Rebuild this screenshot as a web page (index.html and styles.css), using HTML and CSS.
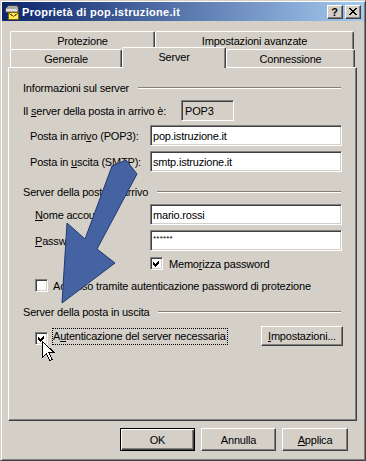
FILE: index.html
```html
<!DOCTYPE html>
<html>
<head>
<meta charset="utf-8">
<link rel="stylesheet" href="styles.css">
</head>
<body>
<div class="window">
  <div class="titlebar">
    <svg class="app-icon" viewBox="0 0 16 16" width="16" height="16" shape-rendering="crispEdges">
      <polygon points="2,5 6,1 14,1 15,3 15,8 2,8" fill="#a8a8a8" stroke="#404040" stroke-width="1"/>
      <rect x="3" y="5" width="11" height="2" fill="#e0e0e0"/>
      <rect x="5.5" y="8.5" width="10" height="7" fill="#ffe860" stroke="#806000" stroke-width="1"/>
      <polyline points="6,9 10.5,12.5 15,9" fill="none" stroke="#806000" stroke-width="1"/>
    </svg>
    <span class="title">Proprietà di pop.istruzione.it</span>
    <span class="cbtn help">?</span>
    <span class="cbtn close">
      <svg viewBox="0 0 8 7" width="8" height="7" shape-rendering="crispEdges">
        <path d="M0 0h2v1h-2zM6 0h2v1h-2zM1 1h2v1h-2zM5 1h2v1h-2zM2 2h4v1h-4zM3 3h2v1h-2zM2 4h4v1h-4zM1 5h2v1h-2zM5 5h2v1h-2zM0 6h2v1h-2zM6 6h2v1h-2z" fill="#000"/>
      </svg>
    </span>
  </div>
  <div class="dialog">
    <div class="tabs">
      <div class="tabrow">
        <div class="tab t-prot">Protezione</div>
        <div class="tab t-imp">Impostazioni avanzate</div>
      </div>
      <div class="tabrow front">
        <div class="tab t-gen">Generale</div>
        <div class="tab t-srv selected">Server</div>
        <div class="tab t-con">Connessione</div>
      </div>
    </div>
    <div class="panel">
      <div class="ghead"><span>Informazioni sul server</span></div>
      <div class="row r-info">
        <span class="lbl lbl-info">Il <u>s</u>erver della posta in arrivo è:</span>
        <span class="field readonly">POP3</span>
      </div>
      <div class="row r-in ind1">
        <span class="lbl">Posta in arri<u>v</u>o (POP3):</span>
        <span class="field">pop.istruzione.it</span>
      </div>
      <div class="row r-out ind1">
        <span class="lbl">Posta in <u>u</u>scita (SMTP):</span>
        <span class="field">smtp.istruzione.it</span>
      </div>
      <div class="ghead g2"><span>Server della posta in arrivo</span></div>
      <div class="row r-acc ind2">
        <span class="lbl"><u>N</u>ome account:</span>
        <span class="field">mario.rossi</span>
      </div>
      <div class="row r-pwd ind2">
        <span class="lbl"><u>P</u>assword:</span>
        <span class="field pwd">******</span>
      </div>
      <div class="crow r-mem">
        <span class="cb checked"><svg viewBox="0 0 13 13" width="13" height="13" shape-rendering="crispEdges"><polygon points="3,5 5,7 9,3 9,6 5,10 3,8" fill="#000"/></svg></span>
        <span class="clabel">Memo<u>r</u>izza password</span>
      </div>
      <div class="crow r-spa">
        <span class="cb"></span>
        <span class="clabel">Accesso tramite autenticazione password di protezione</span>
      </div>
      <div class="ghead g3"><span>Server della posta in uscita</span></div>
      <div class="crow r-auth">
        <span class="cb checked"><svg viewBox="0 0 13 13" width="13" height="13" shape-rendering="crispEdges"><polygon points="3,5 5,7 9,3 9,6 5,10 3,8" fill="#000"/></svg></span>
        <span class="focus">A<u>u</u>tenticazione del server necessaria</span>
        <span class="btn btn-imp"><u>I</u>mpostazioni...</span>
      </div>
    </div>
    <div class="buttons">
      <span class="btn default">OK</span>
      <span class="btn">Annulla</span>
      <span class="btn btn-apply"><u>A</u>pplica</span>
    </div>
  </div>
</div>
<svg class="overlay" width="366" height="461" viewBox="0 0 366 461">
  <polygon points="112,166 126,160 137,174 97,249 115,263 62,303 67,223 85,239" fill="#4563a2" stroke="#22386f" stroke-width="1" stroke-linejoin="round"/>
</svg>
<svg class="cursor" width="13" height="21" viewBox="0 0 13 21" shape-rendering="crispEdges">
  <polygon points="0.5,0.5 0.5,16.5 4.5,12.5 7.5,19.5 10,18.5 7,11.5 12,11.5" fill="#fff" stroke="#000" stroke-width="1"/>
</svg>
</body>
</html>
```
FILE: styles.css
```css
html, body {
  margin: 0;
  padding: 0;
}
body {
  background: #d4d0c8;
  font-family: "Liberation Sans", Arial, sans-serif;
  font-size: 11px;
  letter-spacing: -0.2px;
  color: #000;
}
u { text-decoration: underline; text-underline-offset: 1px; }

.window {
  width: 366px;
  height: 461px;
  box-sizing: border-box;
  border: 1px solid;
  border-color: #d4d0c8 #404040 #404040 #d4d0c8;
  box-shadow: inset 1px 1px #fff, inset -1px -1px #808080;
  padding: 1px;
  display: flex;
  flex-direction: column;
}

.titlebar {
  height: 19px;
  flex: none;
  display: flex;
  align-items: center;
  padding: 0 3px 0 1px;
  background: linear-gradient(90deg, #0a246a 0%, #a6caf0 100%);
}
.app-icon { flex: none; display: block; }
.title {
  color: #fff;
  font-weight: bold;
  letter-spacing: 0.3px;
  margin-left: 3px;
  flex: 1;
  white-space: nowrap;
}
.cbtn {
  width: 16px;
  height: 14px;
  box-sizing: border-box;
  flex: none;
  background: #d4d0c8;
  border: 1px solid;
  border-color: #fff #404040 #404040 #fff;
  box-shadow: inset -1px -1px #808080;
  display: flex;
  align-items: center;
  justify-content: center;
  letter-spacing: 0;
}
.cbtn svg { display: block; margin-left: -1px; }
.help { font-weight: bold; font-size: 11px; line-height: 12px; padding-right: 1px; }
.close { margin-left: 2px; }

.dialog {
  flex: 1;
  display: flex;
  flex-direction: column;
  padding: 10px 7px 0 6px;
}

.tabs { margin-left: 2px; }
.tabrow {
  display: flex;
  align-items: flex-end;
  height: 18px;
}
.tab {
  box-sizing: border-box;
  height: 18px;
  line-height: 17px;
  padding-top: 1px;
  text-align: center;
  background: #d4d0c8;
  border-top: 1px solid #fff;
  border-left: 1px solid #fff;
  border-right: 1px solid #404040;
  box-shadow: inset -1px 0 #808080;
  border-radius: 2px 2px 0 0;
  white-space: nowrap;
}
.t-prot { width: 145px; }
.t-imp { width: 199px; }
.t-gen { width: 112px; }
.t-srv { width: 104px; }
.t-con { width: 129px; }
.tab.selected {
  height: 21px;
  line-height: 19px;
  padding-top: 0;
  margin-bottom: -1px;
  position: relative;
  z-index: 1;
}

.panel {
  width: 349px;
  height: 354px;
  box-sizing: border-box;
  border: 1px solid;
  border-color: #fff #404040 #404040 #fff;
  box-shadow: inset -1px -1px #808080;
  padding-top: 13px;
  display: flex;
  flex-direction: column;
}

.ghead {
  display: flex;
  align-items: center;
  height: 14px;
  padding: 0 15px 0 14px;
  white-space: nowrap;
}
.ghead::after {
  content: "";
  flex: 1;
  margin-left: 9px;
  height: 0;
  border-top: 1px solid #808080;
  border-bottom: 1px solid #fff;
}
.g2, .g3 { margin-top: 13px; }

.row {
  display: flex;
  align-items: center;
  height: 21px;
  padding: 0 14px 0 14px;
  white-space: nowrap;
}
.row .lbl { flex: 1; }
.row .lbl-info { flex: none; width: 158px; }
.ind1 { padding-left: 21px; }
.ind2 { padding-left: 26px; }
.r-info { margin-top: 5px; }
.r-in { margin-top: 4px; }
.r-out { margin-top: 5px; }
.r-acc { margin-top: 5px; }
.r-pwd { margin-top: 5px; }

.field {
  width: 192px;
  height: 21px;
  flex: none;
  box-sizing: border-box;
  border: 1px solid;
  border-color: #808080 #fff #fff #808080;
  box-shadow: inset 1px 1px #404040, inset -1px -1px #d4d0c8;
  background: #fff;
  padding-left: 2px;
  display: flex;
  align-items: center;
}
.field.readonly {
  width: 53px;
  background: #d4d0c8;
  padding-left: 3px;
}
.field.pwd {
  font-size: 8px;
  letter-spacing: 0.2px;
  align-items: flex-start;
  padding-top: 3px;
}

.crow {
  display: flex;
  align-items: center;
  height: 13px;
  white-space: nowrap;
}
.cb {
  width: 13px;
  height: 13px;
  flex: none;
  box-sizing: border-box;
  border: 1px solid;
  border-color: #808080 #fff #fff #808080;
  box-shadow: inset 1px 1px #404040, inset -1px -1px #d4d0c8;
  background: #fff;
}
.cb svg { display: block; margin: -1px 0 0 -1px; }
.r-mem { margin-top: 6px; padding-left: 141px; }
.r-mem .clabel { margin-left: 6px; }
.r-spa { margin-top: 9px; padding-left: 26px; }
.r-spa .clabel { margin-left: 5px; }

.r-auth {
  margin-top: 7px;
  height: 20px;
  align-items: flex-start;
  padding: 0 13px 0 26px;
}
.r-auth .cb { margin-top: 6px; }
.focus {
  margin-top: 2px;
  margin-left: 4px;
  height: 17px;
  box-sizing: border-box;
  line-height: 15px;
  padding: 0 1px 0 0;
  border: 1px dotted #000;
}

.btn {
  box-sizing: border-box;
  background: #d4d0c8;
  border: 1px solid;
  border-color: #fff #404040 #404040 #fff;
  box-shadow: inset -1px -1px #808080;
  display: flex;
  align-items: center;
  justify-content: center;
  white-space: nowrap;
}
.btn-imp {
  margin-left: auto;
  width: 82px;
  height: 20px;
}

.buttons {
  margin-top: 7px;
  display: flex;
  justify-content: flex-end;
  gap: 6px;
  padding-right: 9px;
}
.buttons .btn {
  width: 75px;
  height: 23px;
}
.buttons .btn-apply { width: 66px; }
.btn.default {
  border: 1px solid #000;
  box-shadow: inset 1px 1px #fff, inset -1px -1px #404040, inset -2px -2px #808080;
}

.overlay {
  position: absolute;
  left: 0;
  top: 0;
  pointer-events: none;
}
.cursor {
  position: absolute;
  left: 42px;
  top: 341px;
  pointer-events: none;
}
```
